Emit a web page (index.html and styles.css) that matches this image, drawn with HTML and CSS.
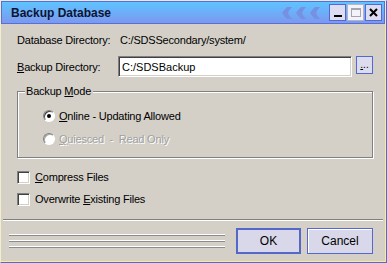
FILE: index.html
```html
<!DOCTYPE html>
<html>
<head>
<meta charset="utf-8">
<link rel="stylesheet" href="styles.css">
</head>
<body>
<div class="window">
  <div class="titlebar">
    <span class="title">Backup Database</span>
    <svg class="chevrons" width="42" height="12" viewBox="0 0 42 12">
      <path d="M6 0 H11 Q8 3 7 6 Q8 9 11 12 H6 Q3 9 1 6 Q3 3 6 0 Z" />
      <path d="M20 0 H25 Q22 3 21 6 Q22 9 25 12 H20 Q17 9 15 6 Q17 3 20 0 Z" />
      <path d="M34 0 H39 Q36 3 35 6 Q36 9 39 12 H34 Q31 9 29 6 Q31 3 34 0 Z" />
    </svg>
    <div class="tbtns">
      <span class="tbtn active"><svg width="15" height="15" viewBox="0 0 15 15"><rect x="4" y="10" width="8" height="2" fill="#000"/></svg></span>
      <span class="tbtn disabled"><svg width="15" height="15" viewBox="0 0 15 15"><rect x="3.5" y="3.5" width="9" height="8" fill="none" stroke="#a4a4b4"/><rect x="3" y="3" width="10" height="2" fill="#a4a4b4"/></svg></span>
      <span class="tbtn active"><svg width="15" height="15" viewBox="0 0 15 15"><path d="M4 4 L11 11 M11 4 L4 11" stroke="#000" stroke-width="2"/></svg></span>
    </div>
  </div>
  <div class="content">
    <div class="row row1">
      <span class="lbl lbl1">Database Directory:</span>
      <span class="val">C:/SDSSecondary/system/</span>
    </div>
    <div class="row row2">
      <span class="lbl lbl2"><u>B</u>ackup Directory:</span>
      <div class="input">C:/SDSBackup</div>
      <div class="browse"><u>.</u>..</div>
    </div>
    <div class="group">
      <span class="legend">Backup <u>M</u>ode</span>
      <div class="opt opt1"><span class="radio checked"></span><span><u>O</u>nline - Updating Allowed</span></div>
      <div class="opt opt2 disabled"><span class="radio"></span><span><u>Q</u>uiesced &nbsp;-&nbsp; Read Only</span></div>
    </div>
    <div class="chk chk1"><span class="box"></span><span><u>C</u>ompress Files</span></div>
    <div class="chk chk2"><span class="box"></span><span>Overwrite <u>E</u>xisting Files</span></div>
    <div class="sep"></div>
    <div class="footer">
      <div class="grip"><i></i><i></i><i></i></div>
      <div class="btn default">OK</div>
      <div class="btn">Cancel</div>
    </div>
  </div>
</div>
</body>
</html>
```
FILE: styles.css
```css
html, body { margin: 0; padding: 0; }
body {
  width: 387px;
  height: 263px;
  overflow: hidden;
  background: #d4d0c8;
  font-family: "Liberation Sans", Arial, sans-serif;
  font-size: 11px;
  color: #000;
}
.window {
  box-sizing: border-box;
  width: 387px;
  height: 263px;
  background: #ecebdc;
  border-top: 1px solid #e8e8ee;
  border-left: 1px solid #f2eecc;
  border-right: 1px solid #5468d0;
  border-bottom: 1px solid #5468d0;
  display: flex;
  flex-direction: column;
}
.titlebar {
  box-sizing: border-box;
  width: 384px;
  height: 23px;
  border: 1px solid #5a6ed8;
  background: linear-gradient(#5ec4ff, #6cb0fa 45%, #7c98ee);
  display: flex;
  align-items: center;
  padding: 0 2px 0 9px;
}
.title {
  font-weight: bold;
  font-size: 12px;
  color: #0e1430;
  letter-spacing: 0;
}
.chevrons {
  margin-left: auto;
  margin-right: 6px;
  fill: #7690e2;
}
.tbtns { display: flex; gap: 1px; }
.tbtn {
  box-sizing: border-box;
  width: 17px;
  height: 17px;
  display: flex;
  align-items: center;
  justify-content: center;
}
.tbtn.active { border: 1px solid #5468d0; background: #dcdcf2; }
.tbtn.disabled { border: 1px solid #b4b4c4; background: #f4f4f8; }
.content {
  box-sizing: border-box;
  flex: 1;
  width: 385px;
  background: #d4d0c8;
  border-right: 1px solid #f4eca0;
  border-bottom: 1px solid #f4eca0;
  padding: 9px 0 0 16px;
  display: flex;
  flex-direction: column;
  letter-spacing: -0.2px;
}
.row { display: flex; align-items: center; }
.row1 { height: 14px; }
.lbl1 { width: 103px; }
.row2 { height: 21px; margin-top: 9px; }
.lbl2 { width: 101px; }
.input {
  box-sizing: border-box;
  width: 234px;
  height: 21px;
  background: #fff;
  border-top: 1px solid #808080;
  border-left: 1px solid #808080;
  border-right: 1px solid #fff;
  border-bottom: 1px solid #fff;
  box-shadow: inset 1px 1px 0 #404040, inset -1px -1px 0 #d4d0c8;
  padding: 0 3px;
  display: flex;
  align-items: center;
  letter-spacing: 0;
}
.browse {
  box-sizing: border-box;
  width: 17px;
  height: 18px;
  margin-left: 4px;
  align-self: flex-start;
  border: 1px solid #5468d0;
  background: #dcdcee;
  text-align: center;
  line-height: 16px;
  font-size: 10px;
  letter-spacing: 0;
}
.group {
  position: relative;
  box-sizing: border-box;
  width: 356px;
  height: 67px;
  margin-top: 14px;
  border: 1px solid #808080;
  box-shadow: 1px 1px 0 #fff, inset 1px 1px 0 #fff;
  padding: 17px 0 0 25px;
}
.legend {
  position: absolute;
  left: 7px;
  top: -7px;
  padding: 0 2px 0 1px;
  background: #d4d0c8;
  line-height: 13px;
}
.opt { display: flex; align-items: center; height: 14px; }
.opt2 { margin-top: 9px; }
.opt.disabled { color: #a0a0a0; text-shadow: 1px 1px 0 #fff; }
.radio {
  box-sizing: border-box;
  width: 12px;
  height: 12px;
  border-radius: 50%;
  border: 1px solid;
  border-color: #808080 #fff #fff #808080;
  box-shadow: inset 1px 1px 0 #404040;
  background: #fff;
  margin-right: 4px;
  display: flex;
  align-items: center;
  justify-content: center;
}
.radio.checked::after {
  content: "";
  width: 4px;
  height: 4px;
  border-radius: 50%;
  background: #000;
}
.opt.disabled .radio { box-shadow: inset 1px 1px 0 #a8a8a8; }
.chk { display: flex; align-items: center; height: 16px; }
.chk1 { margin-top: 11px; }
.chk2 { margin-top: 6px; }
.box {
  box-sizing: border-box;
  width: 13px;
  height: 13px;
  background: #fff;
  border: 1px solid;
  border-color: #808080 #fff #fff #808080;
  box-shadow: inset 1px 1px 0 #404040, inset -1px -1px 0 #d4d0c8;
  margin-right: 5px;
}
.sep {
  margin: 12px 0 0 -14px;
  width: 380px;
  height: 1px;
  background: #808080;
  border-bottom: 1px solid #fff;
}
.footer {
  display: flex;
  align-items: flex-start;
  margin: 7px 0 0 -8px;
}
.grip {
  width: 216px;
  margin-top: 6px;
  display: flex;
  flex-direction: column;
  gap: 4px;
}
.grip i {
  display: block;
  height: 1px;
  background: #fff;
  border-bottom: 1px solid #8c8c8c;
}
.btn {
  box-sizing: border-box;
  width: 66px;
  height: 26px;
  margin-left: 6px;
  border: 1px solid #5468d0;
  background: #d8d8ea;
  box-shadow: inset 1px 1px 0 #fff;
  display: flex;
  align-items: center;
  justify-content: center;
  font-size: 12px;
  letter-spacing: 0;
}
.btn.default {
  width: 65px;
  margin-left: 11px;
  border: 2px solid #5468c8;
  box-shadow: none;
}
```
